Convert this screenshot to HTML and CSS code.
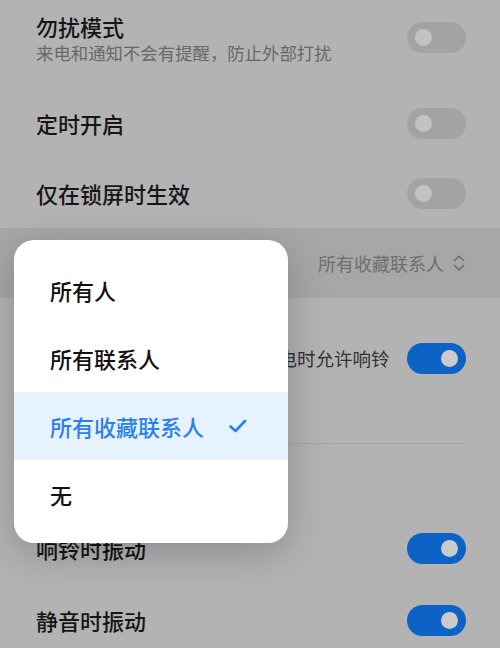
FILE: index.html
```html
<!DOCTYPE html>
<html lang="zh-CN">
<head>
    <meta charset="UTF-8">
    <meta name="viewport" content="width=device-width, initial-scale=1.0">
    <title>勿扰模式</title>
    <link rel="stylesheet" href="styles.css">
</head>
<body>
    <div class="settings">
        <div class="row row-top">
            <div class="row-text">
                <div class="row-title">勿扰模式</div>
                <div class="row-sub">来电和通知不会有提醒，防止外部打扰</div>
            </div>
            <span class="switch"></span>
        </div>

        <div class="row">
            <div class="row-title">定时开启</div>
            <span class="switch"></span>
        </div>

        <div class="row">
            <div class="row-title">仅在锁屏时生效</div>
            <span class="switch"></span>
        </div>

        <div class="row row-pressed">
            <div class="row-value">
                所有收藏联系人
                <svg class="updown" width="14" height="20" viewBox="0 0 14 20">
                    <path d="M2.5 7.5 L7 3 L11.5 7.5" />
                    <path d="M2.5 12.5 L7 17 L11.5 12.5" />
                </svg>
            </div>
        </div>

        <div class="row row-tall">
            <div class="row-note">同一号码在15分钟内第二次来电时允许响铃</div>
            <span class="switch on"></span>
        </div>

        <div class="divider"></div>

        <div class="section-gap"></div>

        <div class="row row-low">
            <div class="row-title">响铃时振动</div>
            <span class="switch on"></span>
        </div>

        <div class="row row-low">
            <div class="row-title">静音时振动</div>
            <span class="switch on"></span>
        </div>
    </div>

    <div class="menu">
        <div class="menu-item">所有人</div>
        <div class="menu-item">所有联系人</div>
        <div class="menu-item selected">
            所有收藏联系人
            <svg class="check" width="20" height="16" viewBox="0 0 20 16">
                <path d="M2.5 8.5 L7.5 13 L17 3" />
            </svg>
        </div>
        <div class="menu-item">无</div>
    </div>
</body>
</html>
```

FILE: styles.css
```css
* {
    margin: 0;
    padding: 0;
    box-sizing: border-box;
}

body {
    background-color: #b3b3b3;
    font-family: 'Noto Sans CJK SC', 'Noto Sans', sans-serif;
    height: 648px;
    overflow: hidden;
    position: relative;
}

.row {
    display: flex;
    align-items: center;
    justify-content: space-between;
    height: 70px;
    padding: 0 34px 0 36px;
}

.row-top {
    height: 88px;
    align-items: flex-start;
    padding-top: 12px;
}

.row-top .switch {
    margin-top: 10px;
}

.row-title {
    font-size: 22px;
    line-height: 28px;
    font-weight: 500;
    color: #161616;
}

.row-sub {
    font-size: 17.4px;
    line-height: 26px;
    color: #686868;
}

.row-pressed {
    justify-content: flex-end;
    background-color: #a7a7a7;
}

.row-value {
    display: flex;
    align-items: center;
    gap: 8px;
    font-size: 18px;
    color: #6e6e6e;
}

.updown path {
    fill: none;
    stroke: #6e6e6e;
    stroke-width: 1.6;
    stroke-linecap: round;
    stroke-linejoin: round;
}

.row-tall {
    height: 120px;
}

.row-note {
    font-size: 18.5px;
    line-height: 26px;
    color: #333;
}

.divider {
    height: 1px;
    margin: 25px 36px 0;
    background-color: #a6a6a6;
}

.section-gap {
    height: 68px;
}

.row-low {
    height: 72px;
}

.switch {
    position: relative;
    flex-shrink: 0;
    width: 59px;
    height: 31px;
    border-radius: 16px;
    background-color: #a3a3a3;
}

.switch::after {
    content: '';
    position: absolute;
    top: 7px;
    left: 8px;
    width: 17px;
    height: 17px;
    border-radius: 50%;
    background-color: #c2c2c2;
}

.switch.on {
    background-color: #0c63c5;
}

.switch.on::after {
    left: auto;
    right: 8px;
    background-color: #cbcbcb;
}

/* popup over the dimmed list */
.menu {
    position: absolute;
    left: 14px;
    top: 240px;
    width: 274px;
    height: 303px;
    padding-top: 16px;
    background-color: #fff;
    border-radius: 20px;
    overflow: hidden;
    box-shadow: 0 10px 40px rgba(0, 0, 0, 0.22);
}

.menu-item {
    display: flex;
    align-items: center;
    height: 68px;
    padding-left: 36px;
    font-size: 22px;
    font-weight: 500;
    color: #111;
}

.menu-item.selected {
    background-color: #e6f2fe;
    color: #2b80ea;
}

.check {
    margin-left: 24px;
}

.check path {
    fill: none;
    stroke: #2b80ea;
    stroke-width: 2.6;
    stroke-linecap: round;
    stroke-linejoin: round;
}
```
